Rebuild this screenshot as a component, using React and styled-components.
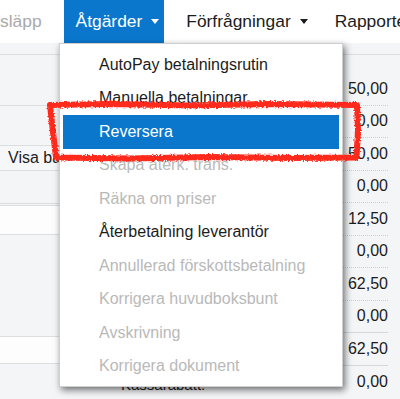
import React from 'react';
import styled, { createGlobalStyle } from 'styled-components';

const GlobalStyle = createGlobalStyle`
  html, body {
    margin: 0;
    padding: 0;
    background: #f4f5f7;
  }
  body {
    font-family: "Liberation Sans", Arial, sans-serif;
    color: #222;
    overflow: hidden;
  }
`;

const navItems = [
  { label: 'släpp', muted: true },
  { label: 'Åtgärder', caret: true, active: true },
  { label: 'Förfrågningar', caret: true },
  { label: 'Rapporter', caret: true },
];

const menuItems = [
  { label: 'AutoPay betalningsrutin' },
  { label: 'Manuella betalningar' },
  { label: 'Reversera', selected: true },
  { label: 'Skapa återk. trans.', disabled: true },
  { label: 'Räkna om priser', disabled: true },
  { label: 'Återbetalning leverantör' },
  { label: 'Annullerad förskottsbetalning', disabled: true },
  { label: 'Korrigera huvudboksbunt', disabled: true },
  { label: 'Avskrivning', disabled: true },
  { label: 'Korrigera dokument', disabled: true },
];

const amounts = [
  { value: '50,00' },
  { value: '0,00' },
  { value: '50,00' },
  { value: '0,00' },
  { value: '12,50' },
  { value: '0,00' },
  { value: '62,50' },
  { value: '0,00', solid: true },
  { value: '62,50', solid: true },
  { value: '0,00' },
];

const leftRows = [
  { h: 11 },
  { h: 50 },
  { h: 39 },
  { h: 24, label: 'Visa baser', light: true },
  { h: 32, double: true },
  { h: 28, white: true },
  { h: 101 },
  { h: 26, white: true },
  { h: 40, label2: 'Kassarabatt:' },
];

export default function App() {
  return (
    <Page>
      <GlobalStyle />
      <Nav>
        {navItems.map((item) => (
          <NavItem key={item.label} active={item.active} muted={item.muted} caret={item.caret}>
            {item.label}
            {item.caret && <Caret />}
          </NavItem>
        ))}
      </Nav>

      <Content>
        <LeftPanel>
          {leftRows.map((row, i) => (
            <FormRow key={i} h={row.h} white={row.white} light={row.light} double={row.double}>
              {row.label && <RowLabel>{row.label}</RowLabel>}
              {row.label2 && <SumLabel>{row.label2}</SumLabel>}
            </FormRow>
          ))}
        </LeftPanel>
        <AmountColumn>
          <AmountHead />
          {amounts.map((a, i) => (
            <Amount key={i} solid={a.solid} last={i === amounts.length - 1}>
              {a.value}
            </Amount>
          ))}
        </AmountColumn>
      </Content>

      <Dropdown>
        {menuItems.map((item) => (
          <MenuItem key={item.label} selected={item.selected} disabled={item.disabled}>
            {item.label}
          </MenuItem>
        ))}
      </Dropdown>

      <Scribble viewBox="0 0 400 399" width="400" height="399">
        <defs>
          <filter id="rough" x="-5%" y="-20%" width="110%" height="140%">
            <feTurbulence type="fractalNoise" baseFrequency="0.6" numOctaves="2" seed="4" />
            <feDisplacementMap in="SourceGraphic" scale="4" />
          </filter>
        </defs>
        <path
          d="M50 105 L110 104 L190 105.5 L270 104 L357 105 L358 130 L356.5 157.5 L290 158 L210 157 L130 158.5 L56 157.5 L53 132 Z"
          fill="none"
          stroke="#ff2a1c"
          strokeWidth="6"
          strokeLinejoin="round"
          filter="url(#rough)"
        />
      </Scribble>
    </Page>
  );
}

const Page = styled.div`
  position: relative;
  width: 400px;
  height: 399px;
  overflow: hidden;
  background: #f4f5f7;
`;

const Nav = styled.nav`
  display: flex;
  align-items: stretch;
  gap: 10px;
  height: 43px;
  background: #fff;
  white-space: nowrap;
`;

const NavItem = styled.div`
  display: flex;
  align-items: center;
  padding: ${(p) => (p.caret ? '0 5px 0 12px' : '0 12px')};
  margin-left: ${(p) => (p.muted ? '-12px' : '0')};
  font-size: 17.4px;
  color: ${(p) => (p.active ? '#fff' : p.muted ? '#a9a9a9' : '#1c1c1c')};
  background: ${(p) => (p.active ? '#0a77cc' : 'transparent')};
`;

const Caret = styled.span`
  display: inline-block;
  margin-left: 9px;
  width: 0;
  height: 0;
  border-left: 4px solid transparent;
  border-right: 4px solid transparent;
  border-top: 5px solid currentColor;
`;

const Content = styled.div`
  display: grid;
  grid-template-columns: 343px 1fr;
  height: 356px;
`;

const LeftPanel = styled.div`
  display: flex;
  flex-direction: column;
`;

const FormRow = styled.div`
  position: relative;
  display: flex;
  align-items: center;
  flex: 0 0 ${(p) => p.h}px;
  background: ${(p) => (p.white ? '#fdfdfe' : p.light ? '#f6f7f9' : '#f4f5f7')};
  border-bottom: ${(p) => (p.double ? '3px double #dcdde0' : '1px solid #dcdde0')};
  box-sizing: content-box;
`;

const RowLabel = styled.span`
  padding-left: 8px;
  font-size: 16px;
  color: #222;
`;

const SumLabel = styled.span`
  margin-left: 121px;
  margin-top: 12px;
  font-size: 15px;
  color: #222;
  align-self: flex-start;
`;

const AmountColumn = styled.div`
  display: flex;
  flex-direction: column;
  background: #f4f5f7;
`;

const AmountHead = styled.div`
  flex: 0 0 11px;
  border-bottom: 1px solid #dcdde0;
  margin-bottom: 18px;
`;

const Amount = styled.div`
  display: flex;
  align-items: center;
  justify-content: flex-end;
  flex: 0 0 32.5px;
  box-sizing: border-box;
  margin-right: 12px;
  font-size: 16px;
  color: #1c1c1c;
  border-bottom: ${(p) => (p.last ? 'none' : p.solid ? '1px solid #d6d7da' : '1px dotted #cfd0d3')};
`;

const Dropdown = styled.ul`
  position: absolute;
  top: 43px;
  left: 59px;
  width: 284px;
  margin: 0;
  padding: 4px 3px 3px;
  box-sizing: border-box;
  list-style: none;
  background: #fff;
  border: 1px solid #cfcfcf;
  box-shadow: 2px 3px 7px rgba(0, 0, 0, 0.55);
`;

const MenuItem = styled.li`
  display: flex;
  align-items: center;
  height: 33.5px;
  padding-left: 36px;
  font-size: 16px;
  white-space: nowrap;
  color: ${(p) => (p.selected ? '#fff' : p.disabled ? '#b9b9b9' : '#1c1c1c')};
  background: ${(p) => (p.selected ? '#0a77cc' : 'transparent')};
`;

const Scribble = styled.svg`
  position: absolute;
  top: 0;
  left: 0;
  pointer-events: none;
`;
